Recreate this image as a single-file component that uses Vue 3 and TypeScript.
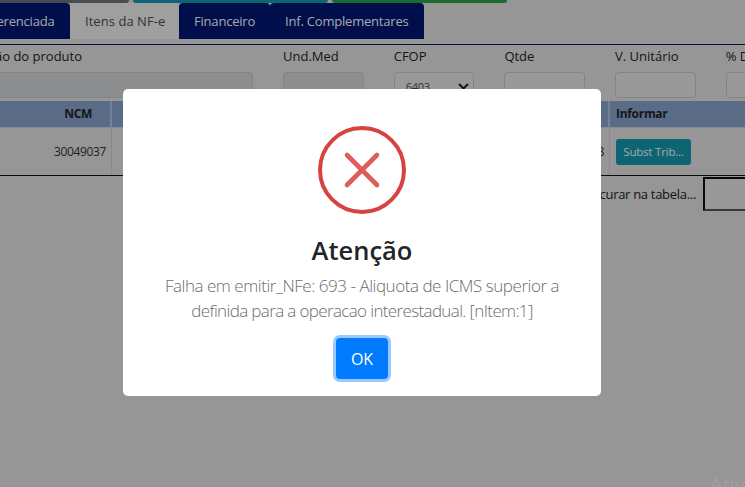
<script setup lang="ts">
const tabs = [
  { label: 'NF-e Referenciada', active: false },
  { label: 'Itens da NF-e', active: true },
  { label: 'Financeiro', active: false },
  { label: 'Inf. Complementares', active: false },
]
const fields = [
  { label: 'Und.Med', disabled: true },
  { label: 'CFOP', select: '6403' },
  { label: 'Qtde' },
  { label: 'V. Unitário' },
  { label: '% Desc' },
]
</script>

<template>
  <div class="page">
    <div class="topbar">
      <span class="bar gray"></span>
      <span class="bar teal"></span>
      <span class="bar green"></span>
    </div>
    <nav class="tabs">
      <a v-for="t in tabs" :key="t.label" class="tab" :class="{ active: t.active }">{{ t.label }}</a>
    </nav>
    <div class="form">
      <div class="field desc">
        <label>Descrição do produto</label>
        <div class="input disabled"></div>
      </div>
      <div v-for="f in fields" :key="f.label" class="field">
        <label>{{ f.label }}</label>
        <div class="input" :class="{ disabled: f.disabled }">
          <template v-if="f.select">
            <span class="sel">{{ f.select }}</span>
            <svg class="chev" width="11" height="7" viewBox="0 0 11 7"><path d="M1 1 5.5 5.5 10 1" fill="none" stroke="#222" stroke-width="2" /></svg>
          </template>
        </div>
      </div>
    </div>
    <div class="table">
      <div class="th right">NCM</div>
      <div class="th"></div>
      <div class="th inf">Informar</div>
      <div class="td right">30049037</div>
      <div class="td right">8</div>
      <div class="td inf"><button class="trib">Subst Trib...</button></div>
    </div>
    <div class="search">
      <span>Procurar na tabela...</span>
      <div class="sinput"></div>
    </div>

    <div class="overlay">
      <div class="modal">
        <div class="icon">
          <svg width="88" height="88" viewBox="0 0 88 88">
            <circle cx="44" cy="44" r="42" fill="none" stroke="#d64341" stroke-width="4" />
            <path d="M29 29 59 59M59 29 29 59" fill="none" stroke="#df5c5a" stroke-width="4.6" stroke-linecap="round" />
          </svg>
        </div>
        <h2>Atenção</h2>
        <p>Falha em emitir_NFe: 693 - Aliquota de ICMS superior a<br /><span class="line2">definida para a operacao interestadual. [nItem:1]</span></p>
        <button class="ok">OK</button>
      </div>
    </div>
    <div class="watermark">Ativar o Windows</div>
  </div>
</template>

<style>
html, body { margin: 0; padding: 0; }
</style>

<style scoped>
.page {
  position: relative;
  width: 745px;
  height: 487px;
  overflow: hidden;
  background: #e6e6e6;
  font-family: "Open Sans", "Noto Sans", sans-serif;
  color: #212529;
  font-size: 13px;
}
.topbar { display: flex; height: 3px; gap: 4px; margin-left: -20px; }
.bar { display: block; height: 3px; border-radius: 0 0 4px 4px; }
.gray { width: 149px; background: #6c757d; }
.teal { width: 195px; background: #149aaf; }
.green { width: 175px; background: #28a745; }
.tabs { display: flex; height: 36px; margin-left: -60px; }
.tab {
  box-sizing: border-box;
  height: 36px;
  padding: 0 15px;
  line-height: 36px;
  font-size: 13px;
  letter-spacing: -0.2px;
  white-space: nowrap;
  color: #fff;
  background: #001774;
  border-radius: 4px 4px 0 0;
}
.tab:nth-child(1) { width: 130px; padding-left: 7px; }
.tab:nth-child(2) { width: 109px; letter-spacing: 0.05px; }
.tab:nth-child(3) { width: 91px; }
.tab:nth-child(4) { width: 154px; }
.tab.active { background: #f4f4f4; color: #495057; }
.form {
  display: flex;
  gap: 30px;
  margin-top: 5px;
  margin-left: -60px;
  height: 57px;
  border-top: 1px solid #001a5a;
  box-sizing: border-box;
  padding-top: 2px;
}
.field { width: 80.7px; flex: none; }
.field.desc { width: 313px; }
.field label {
  display: block;
  height: 25px;
  line-height: 18px;
  font-size: 13px;
  white-space: nowrap;
}
.field.desc label { padding-left: 11px; }
.input {
  box-sizing: border-box;
  height: 26px;
  border: 1px solid #c8ccd0;
  border-radius: 4px;
  background: #ececec;
  position: relative;
}
.input.disabled { background: #d8dadc; }
.sel { position: absolute; left: 11px; top: 6px; font-size: 11px; letter-spacing: -0.2px; color: #495057; }
.chev { position: absolute; right: 4px; top: 10px; }
.table {
  display: grid;
  grid-template-columns: 112px 498px 135px;
  grid-template-rows: 27px 47px;
  border-bottom: 1px solid #111;
  font-size: 12px;
}
.th {
  background: #8aa5d0;
  font-weight: 700;
  line-height: 26px;
  border-right: 2px solid #b4c6e6;
  border-bottom: 1px solid #d0d8e4;
  box-sizing: border-box;
  letter-spacing: -0.3px;
}
.td {
  display: flex;
  align-items: center;
  justify-content: flex-end;
  border-right: 1px solid #d0d4d8;
  box-sizing: border-box;
  font-size: 12px;
  letter-spacing: -0.35px;
  color: #333;
  padding-right: 4px;
}
.right { text-align: right; padding-right: 18px; }
.td.right { padding-right: 5px; }
.th.inf, .td.inf { border-right: 0; padding-left: 6px; justify-content: flex-start; }
.trib {
  width: 75px;
  height: 26px;
  padding: 0;
  border: 0;
  border-radius: 3px;
  background: #149aaf;
  color: #fff;
  font: inherit;
  font-size: 11.5px;
  letter-spacing: -0.2px;
}
.search {
  display: flex;
  align-items: center;
  justify-content: flex-end;
  gap: 7px;
  margin-top: 1px;
  margin-right: -20px;
  font-size: 13px;
  letter-spacing: -0.3px;
  height: 34px;
}
.sinput {
  box-sizing: border-box;
  width: 62px;
  height: 34px;
  border: 2px solid #111;
  border-bottom-color: #555;
  border-right-color: #555;
  background: #ececec;
}
.overlay {
  position: absolute;
  inset: 0;
  display: flex;
  align-items: center;
  justify-content: center;
  box-sizing: border-box;
  padding: 0 21px 2px 0;
  background: rgba(0, 0, 0, 0.35);
}
.modal {
  box-sizing: border-box;
  width: 478px;
  height: 307px;
  padding-top: 37px;
  border-radius: 5px;
  background: #fff;
  display: flex;
  flex-direction: column;
  align-items: center;
}
.icon { width: 88px; height: 88px; }
.icon svg { display: block; }
h2 {
  margin: 18px 0 0;
  font-size: 25.5px;
  line-height: 36px;
  font-weight: 600;
  color: #212529;
}
p {
  margin: 5px 0 0;
  font-size: 17px;
  line-height: 25px;
  letter-spacing: -0.46px;
  font-weight: 300;
  text-align: center;
  color: #6d6d6d;
  white-space: nowrap;
}
.line2 { letter-spacing: -0.64px; }
.ok {
  margin-top: 15px;
  width: 52px;
  height: 41px;
  padding: 0;
  border: 0;
  border-radius: 4px;
  background: #007bff;
  color: #fff;
  font: inherit;
  font-size: 16px;
  box-shadow: 0 0 0 3px rgba(0, 123, 255, 0.4);
}
.watermark {
  position: absolute;
  left: 710px;
  top: 471px;
  font-size: 20px;
  white-space: nowrap;
  color: rgba(255, 255, 255, 0.1);
}
</style>
